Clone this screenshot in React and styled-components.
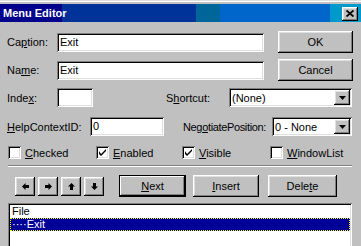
import styled, { createGlobalStyle } from "styled-components";

const GlobalStyle = createGlobalStyle`
  body {
    margin: 0;
    background: #c0c0c0;
    font-family: "Liberation Sans", Arial, sans-serif;
    font-size: 11px;
    color: #000;
  }
`;

const raised = `
  background: #c0c0c0;
  box-shadow: inset -1px -1px #000, inset 1px 1px #fff, inset -2px -2px #808080, inset 2px 2px #dfdfdf;
`;

const sunken = `
  background: #fff;
  box-shadow: inset 1px 1px #808080, inset -1px -1px #fff, inset 2px 2px #000, inset -2px -2px #dfdfdf;
`;

function DropArrow() {
  return (
    <svg width="7" height="4" viewBox="0 0 7 4">
      <path d="M0 0 H7 L3.5 4 Z" fill="#000" />
    </svg>
  );
}

function Arrow({ deg }) {
  return (
    <svg width="7" height="7" viewBox="0 0 7 7" style={{ transform: `rotate(${deg}deg)` }}>
      <path d="M0 3.5 L3.5 0 V2 H7 V5 H3.5 V7 Z" fill="#000" />
    </svg>
  );
}

function CheckBox({ checked, children }) {
  return (
    <Check>
      <Box>
        {checked && (
          <svg width="7" height="7" viewBox="0 0 7 7">
            <path d="M0 2 L0 5 L2 7 L7 2 L7 0 L2 5 Z" fill="#000" />
          </svg>
        )}
      </Box>
      <span>{children}</span>
    </Check>
  );
}

export default function App() {
  return (
    <Window>
      <GlobalStyle />
      <TitleBar>
        <Title>Menu Editor</Title>
        <CloseButton>
          <svg width="8" height="7" viewBox="0 0 8 7">
            <path d="M0.5 0.5 L7.5 6.5 M7.5 0.5 L0.5 6.5" stroke="#000" strokeWidth="1.8" />
          </svg>
        </CloseButton>
      </TitleBar>

      <Body>
        <Row $top={9} $height={22}>
          <Label $width={50}>
            Ca<U>p</U>tion:
          </Label>
          <Field $width={207}>Exit</Field>
          <Button $width={75} $left={14}>OK</Button>
        </Row>
        <Row $top={6} $height={22}>
          <Label $width={50}>
            Na<U>m</U>e:
          </Label>
          <Field $width={207}>Exit</Field>
          <Button $width={75} $left={14}>Cancel</Button>
        </Row>

        <Row $top={7} $height={19}>
          <Label $width={50}>
            Inde<U>x</U>:
          </Label>
          <Field $width={36} />
          <Label $width={63} $left={73}>
            S<U>h</U>ortcut:
          </Label>
          <Combo $width={123}>
            <span>(None)</span>
            <DropButton>
              <DropArrow />
            </DropButton>
          </Combo>
        </Row>

        <Row $top={10} $height={19}>
          <Label $width={83}>
            <U>H</U>elpContextID:
          </Label>
          <Field $width={74}>0</Field>
          <Label $width={89} $left={19} $tight>
            Neg<U>o</U>tiatePosition:
          </Label>
          <Combo $width={80}>
            <span>0 - None</span>
            <DropButton>
              <DropArrow />
            </DropButton>
          </Combo>
        </Row>

        <Checks>
          <CheckBox>
            <U>C</U>hecked
          </CheckBox>
          <CheckBox checked>
            <U>E</U>nabled
          </CheckBox>
          <CheckBox checked>
            <U>V</U>isible
          </CheckBox>
          <CheckBox>
            <U>W</U>indowList
          </CheckBox>
        </Checks>

        <Separator />

        <Row $top={8} $height={22}>
          <Arrows>
            <ArrowButton>
              <Arrow deg={0} />
            </ArrowButton>
            <ArrowButton>
              <Arrow deg={180} />
            </ArrowButton>
            <ArrowButton>
              <Arrow deg={90} />
            </ArrowButton>
            <ArrowButton>
              <Arrow deg={270} />
            </ArrowButton>
          </Arrows>
          <Button $width={67} $left={15} $focused>
            <U>N</U>ext
          </Button>
          <Button $width={66} $left={7}>
            <U>I</U>nsert
          </Button>
          <Button $width={69} $left={9}>
            Dele<U>t</U>e
          </Button>
        </Row>

        <List>
          <Item>File</Item>
          <Item $selected>····Exit</Item>
        </List>
      </Body>
    </Window>
  );
}

const Window = styled.div`
  width: 361px;
  height: 245px;
  overflow: hidden;
  background: #c0c0c0;
  border-top: 1px solid #dfdfdf;
  box-shadow: inset 0 1px #fff;
  padding-top: 3px;
`;

const TitleBar = styled.div`
  height: 18px;
  display: flex;
  align-items: center;
  justify-content: space-between;
  padding: 0 3px;
  background: linear-gradient(
    to right,
    #00008c 0 62px,
    #003399 62px 196px,
    #006699 196px 220px,
    #0066cc 220px 330px,
    #0099cc 330px
  );
`;

const Title = styled.div`
  color: #fff;
  font-weight: bold;
  font-size: 11px;
`;

const CloseButton = styled.div`
  ${raised}
  width: 16px;
  height: 14px;
  display: flex;
  align-items: center;
  justify-content: center;
  margin-top: 1px;
`;

const Body = styled.div`
  padding-left: 7px;
`;

const Row = styled.div`
  display: flex;
  align-items: center;
  margin-top: ${(p) => p.$top}px;
  height: ${(p) => p.$height}px;
`;

const Label = styled.div`
  width: ${(p) => p.$width}px;
  margin-left: ${(p) => p.$left || 0}px;
  white-space: nowrap;
  letter-spacing: ${(p) => (p.$tight ? "-0.35px" : "0")};
`;

const U = styled.span`
  text-decoration: underline;
`;

const Field = styled.div`
  ${sunken}
  box-sizing: border-box;
  width: ${(p) => p.$width}px;
  height: 19px;
  padding: 3px 0 0 3px;
  line-height: 13px;
`;

const Combo = styled.div`
  ${sunken}
  box-sizing: border-box;
  width: ${(p) => p.$width}px;
  height: 19px;
  display: flex;
  align-items: center;
  justify-content: space-between;
  padding: 2px 2px 2px 3px;
`;

const DropButton = styled.div`
  ${raised}
  width: 16px;
  height: 15px;
  display: flex;
  align-items: center;
  justify-content: center;
`;

const Button = styled.div`
  ${raised}
  ${(p) =>
    p.$focused &&
    `box-shadow: inset 0 0 0 1px #000, inset -2px -2px #000, inset 2px 2px #fff, inset -3px -3px #808080;`}
  box-sizing: border-box;
  width: ${(p) => p.$width}px;
  height: 22px;
  margin-left: ${(p) => p.$left || 0}px;
  display: flex;
  align-items: center;
  justify-content: center;
`;

const Checks = styled.div`
  display: grid;
  grid-template-columns: 88px 86px 88px auto;
  margin: 10px 0 0 1px;
  height: 13px;
`;

const Check = styled.div`
  display: flex;
  align-items: center;
  gap: 4px;
`;

const Box = styled.div`
  ${sunken}
  width: 13px;
  height: 13px;
  flex: none;
  display: flex;
  align-items: center;
  justify-content: center;
`;

const Separator = styled.div`
  margin: 6px 0 0 1px;
  width: 344px;
  height: 1px;
  background: #808080;
  border-bottom: 1px solid #fff;
`;

const Arrows = styled.div`
  display: flex;
  gap: 3px;
  margin-left: 8px;
`;

const ArrowButton = styled.div`
  ${raised}
  width: 20px;
  height: 19px;
  display: flex;
  align-items: center;
  justify-content: center;
`;

const List = styled.div`
  ${sunken}
  box-sizing: border-box;
  margin: 6px 0 0 1px;
  width: 344px;
  height: 50px;
  padding: 2px;
`;

const Item = styled.div`
  height: 13px;
  box-sizing: border-box;
  line-height: 11px;
  padding-left: 1px;
  border: 1px ${(p) => (p.$selected ? "dotted #ffff00" : "solid transparent")};
  background: ${(p) => (p.$selected ? "#000099" : "transparent")};
  color: ${(p) => (p.$selected ? "#fff" : "#000")};
`;
